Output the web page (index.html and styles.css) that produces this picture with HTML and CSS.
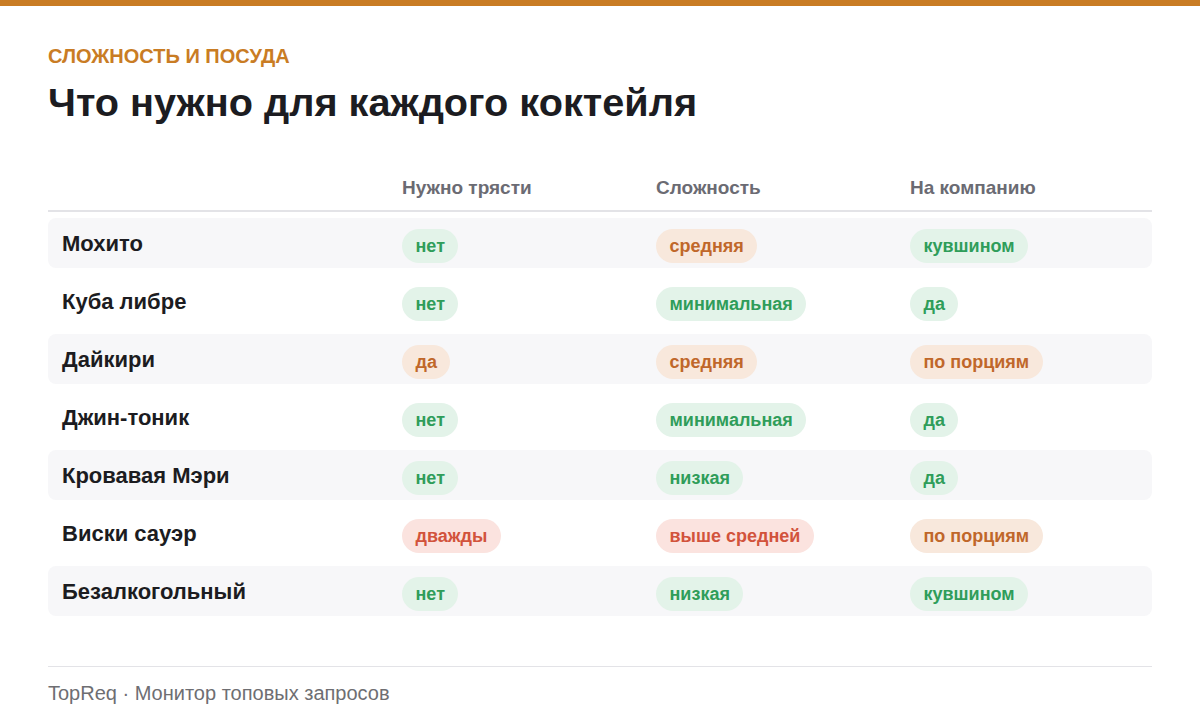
FILE: index.html
```html
<!DOCTYPE html>
<html lang="ru">
<head>
<meta charset="utf-8">
<link rel="stylesheet" href="styles.css">
</head>
<body>
<div class="topbar"></div>
<main class="page">
  <div class="eyebrow">Сложность и посуда</div>
  <h1 class="title">Что нужно для каждого коктейля</h1>
  <section class="table">
    <div class="thead">
      <div class="cell"></div>
      <div class="cell">Нужно трясти</div>
      <div class="cell">Сложность</div>
      <div class="cell">На компанию</div>
    </div>
    <div class="tbody">
      <div class="row">
        <div class="cell name">Мохито</div>
        <div class="cell"><span class="pill green">нет</span></div>
        <div class="cell"><span class="pill orange">средняя</span></div>
        <div class="cell"><span class="pill green">кувшином</span></div>
      </div>
      <div class="row">
        <div class="cell name">Куба либре</div>
        <div class="cell"><span class="pill green">нет</span></div>
        <div class="cell"><span class="pill green">минимальная</span></div>
        <div class="cell"><span class="pill green">да</span></div>
      </div>
      <div class="row">
        <div class="cell name">Дайкири</div>
        <div class="cell"><span class="pill orange">да</span></div>
        <div class="cell"><span class="pill orange">средняя</span></div>
        <div class="cell"><span class="pill orange">по порциям</span></div>
      </div>
      <div class="row">
        <div class="cell name">Джин-тоник</div>
        <div class="cell"><span class="pill green">нет</span></div>
        <div class="cell"><span class="pill green">минимальная</span></div>
        <div class="cell"><span class="pill green">да</span></div>
      </div>
      <div class="row">
        <div class="cell name">Кровавая Мэри</div>
        <div class="cell"><span class="pill green">нет</span></div>
        <div class="cell"><span class="pill green">низкая</span></div>
        <div class="cell"><span class="pill green">да</span></div>
      </div>
      <div class="row">
        <div class="cell name">Виски сауэр</div>
        <div class="cell"><span class="pill red">дважды</span></div>
        <div class="cell"><span class="pill red">выше средней</span></div>
        <div class="cell"><span class="pill orange">по порциям</span></div>
      </div>
      <div class="row">
        <div class="cell name">Безалкогольный</div>
        <div class="cell"><span class="pill green">нет</span></div>
        <div class="cell"><span class="pill green">низкая</span></div>
        <div class="cell"><span class="pill green">кувшином</span></div>
      </div>
    </div>
  </section>
  <footer class="footer">TopReq · Монитор топовых запросов</footer>
</main>
</body>
</html>
```
FILE: styles.css
```css
* { box-sizing: border-box; }
html, body { margin: 0; padding: 0; background: #ffffff; }
body {
  font-family: "Liberation Sans", Arial, "DejaVu Sans", sans-serif;
  color: #1c1c21;
}
.topbar { height: 6px; background: #c97c24; }
.page { padding: 0 48px; }
.eyebrow {
  margin-top: 38px;
  font-size: 20px;
  line-height: 24px;
  font-weight: 700;
  text-transform: uppercase;
  color: #c97c24;
}
.title {
  margin: 10px 0 0;
  font-size: 39.7px;
  line-height: 48px;
  font-weight: 700;
  color: #1c1c21;
}
.table { margin-top: 40px; }
.thead, .row {
  display: grid;
  grid-template-columns: 340px 254px 254px 1fr;
  align-items: center;
}
.cell { padding: 0 14px; }
.thead {
  height: 46px;
  border-bottom: 2px solid #e3e3e7;
  font-size: 19px;
  font-weight: 700;
  color: #6b6b73;
}
.tbody {
  display: flex;
  flex-direction: column;
  gap: 8px;
  padding-top: 6px;
}
.row {
  height: 50px;
  border-radius: 8px;
}
.row:nth-child(odd) { background: #f7f7f9; }
.name {
  font-size: 22px;
  line-height: 28px;
  padding-top: 2px;
  font-weight: 700;
  color: #1c1c21;
}
.pill {
  display: inline-block;
  margin-top: 6px;
  height: 34px;
  line-height: 34px;
  padding: 0 13.5px;
  border-radius: 17px;
  font-size: 18px;
  font-weight: 700;
}
.green { background: #e3f3e9; color: #2f9d5a; }
.orange { background: #f8e8dc; color: #c0672a; }
.red { background: #fbe3df; color: #d2533c; }
.footer {
  margin-top: 50px;
  border-top: 1px solid #e3e3e7;
  padding-top: 14px;
  font-size: 20px;
  line-height: 24px;
  color: #6e6e72;
}
```
